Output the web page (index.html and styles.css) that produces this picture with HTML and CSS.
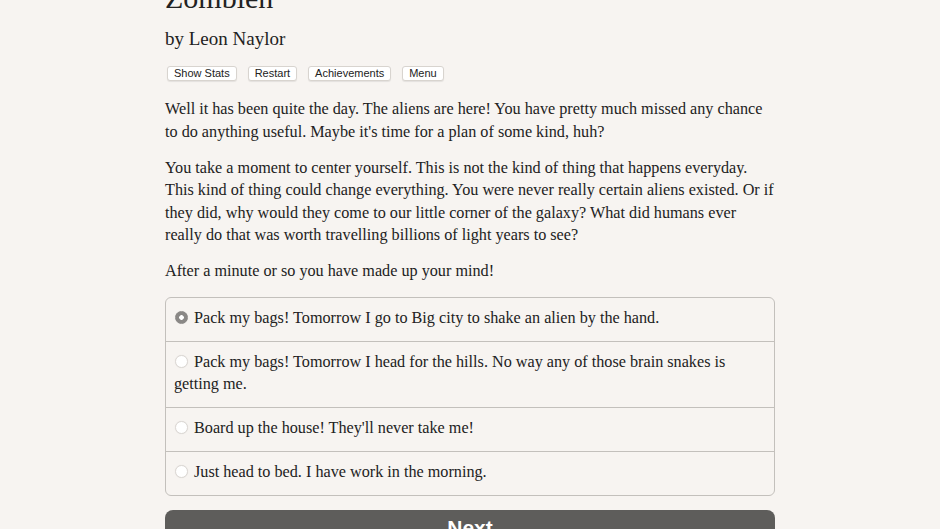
FILE: index.html
```html
<!DOCTYPE html>
<html>
<head>
<meta charset="utf-8">
<link rel="stylesheet" href="styles.css">
</head>
<body>
<main class="page">
  <h1 class="title">Zombien</h1>
  <h2 class="author">by Leon Naylor</h2>
  <div class="toolbar">
    <button class="tb-btn">Show Stats</button>
    <button class="tb-btn">Restart</button>
    <button class="tb-btn">Achievements</button>
    <button class="tb-btn">Menu</button>
  </div>
  <p class="para">Well it has been quite the day. The aliens are here! You have pretty much missed any chance to do anything useful. Maybe it's time for a plan of some kind, huh?</p>
  <p class="para">You take a moment to center yourself. This is not the kind of thing that happens everyday. This kind of thing could change everything. You were never really certain aliens existed. Or if they did, why would they come to our little corner of the galaxy? What did humans ever really do that was worth travelling billions of light years to see?</p>
  <p class="para">After a minute or so you have made up your mind!</p>
  <div class="choices">
    <label class="choice"><span class="radio radio-on"></span>Pack my bags! Tomorrow I go to Big city to shake an alien by the hand.</label>
    <label class="choice"><span class="radio"></span>Pack my bags! Tomorrow I head for the hills. No way any of those brain snakes is getting me.</label>
    <label class="choice"><span class="radio"></span>Board up the house! They'll never take me!</label>
    <label class="choice"><span class="radio"></span>Just head to bed. I have work in the morning.</label>
  </div>
  <button class="next">Next</button>
</main>
</body>
</html>
```
FILE: styles.css
```css
html, body {
  margin: 0;
  padding: 0;
  background: #f7f4f1;
  height: 100%;
  overflow: hidden;
}
.page {
  width: 610px;
  margin: 0 auto;
  margin-top: -20px;
  font-family: "Liberation Serif", serif;
  color: #222;
}
.title {
  font-size: 30px;
  font-weight: normal;
  margin: 0;
  line-height: 36px;
}
.author {
  font-size: 19px;
  font-weight: normal;
  margin: 11px 0 0 0;
  line-height: 24px;
}
.toolbar {
  display: flex;
  gap: 11px;
  margin: 15px 0 0 2px;
}
.tb-btn {
  font-family: "Liberation Sans", Arial, sans-serif;
  font-size: 11px;
  color: #222;
  background: #fff;
  border: 1px solid #d8d4cf;
  border-radius: 3px;
  height: 15px;
  padding: 0 6px;
  line-height: 13px;
  box-shadow: 0 1px 1px rgba(0,0,0,0.08);
}
.para {
  font-size: 16.2px;
  line-height: 22.5px;
  margin: 17px 0 0 0;
}
.para + .para {
  margin-top: 13.5px;
}
.choices {
  margin-top: 14px;
  border: 1px solid #c3c0bc;
  border-radius: 6px;
  overflow: hidden;
}
.choice {
  display: block;
  font-size: 16.2px;
  line-height: 22px;
  padding: 9px 8px 12px 8px;
  border-top: 1px solid #c3c0bc;
}
.choice:first-child {
  border-top: none;
}
.radio {
  display: inline-block;
  width: 13px;
  height: 13px;
  border-radius: 50%;
  background: #fff;
  border: 1px solid #dcd8d4;
  margin: 0 6px 0 1px;
  vertical-align: -1px;
  box-sizing: border-box;
  box-shadow: 0 0 1px rgba(0,0,0,0.1);
}
.radio-on {
  background: radial-gradient(circle, #fff 0 2px, #8a8886 2.6px);
  border-color: #8a8886;
}
.next {
  display: block;
  width: 100%;
  margin-top: 14px;
  height: 36px;
  background: #5e5d5b;
  color: #fff;
  border: none;
  border-radius: 8px;
  font-family: "Liberation Sans", Arial, sans-serif;
  font-weight: bold;
  font-size: 21px;
}
```
